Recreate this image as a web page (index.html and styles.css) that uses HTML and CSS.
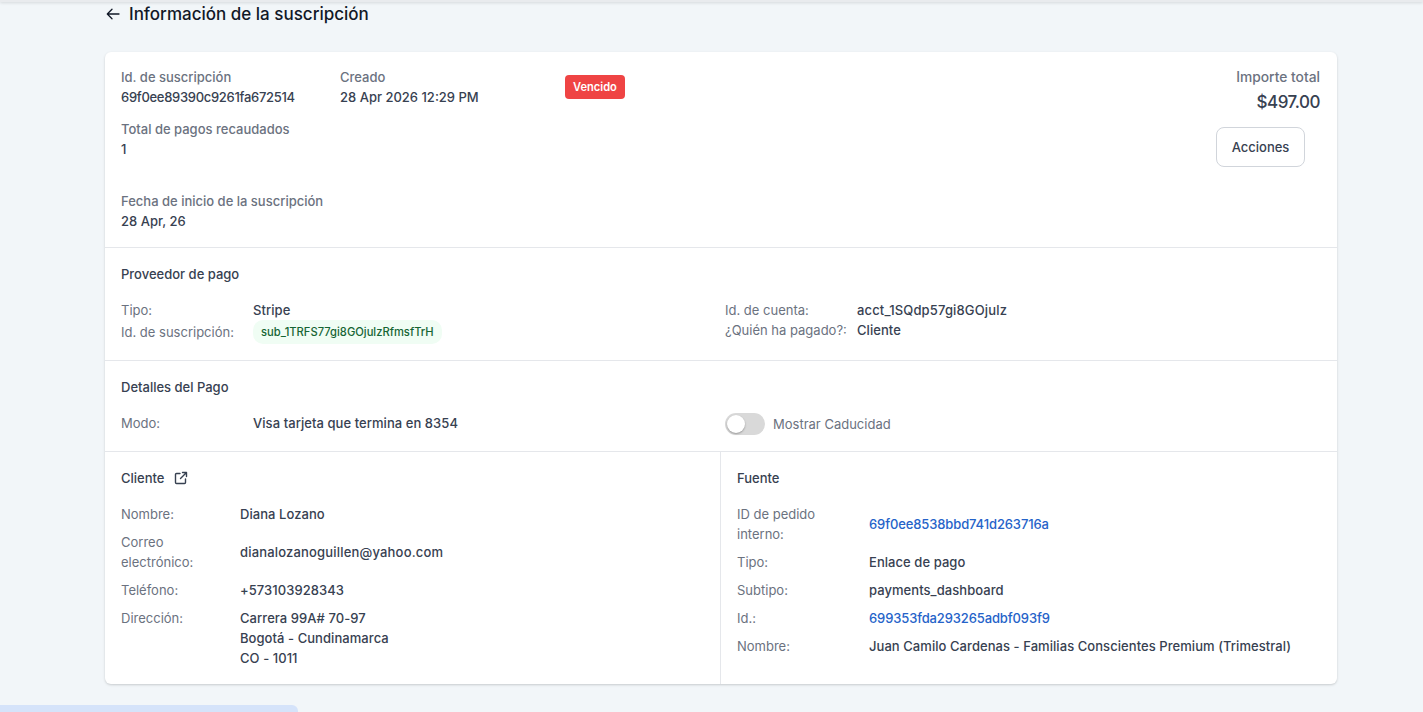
FILE: index.html
```html
<!DOCTYPE html>
<html lang="es">
<head>
    <meta charset="UTF-8">
    <meta name="viewport" content="width=device-width, initial-scale=1.0">
    <link rel="stylesheet" href="styles.css">
    <title>Información de la suscripción</title>
</head>
<body>
    <div class="topbar"></div>

    <div class="page">
        <div class="page-head">
            <svg class="back" width="16" height="16" viewBox="0 0 16 16" fill="none" stroke="#111827" stroke-width="1.3" stroke-linecap="round" stroke-linejoin="round">
                <path d="M14 8H2.5M7 3.2 2.3 8 7 12.8"/>
            </svg>
            <h1>Información de la suscripción</h1>
        </div>

        <div class="card">
            <div class="summary">
                <div class="summary-left">
                    <div class="summary-row">
                        <div class="field field-id">
                            <div class="label">Id. de suscripción</div>
                            <div class="value id-value">69f0ee89390c9261fa672514</div>
                        </div>
                        <div class="field field-date">
                            <div class="label">Creado</div>
                            <div class="value">28 Apr 2026 12:29 PM</div>
                        </div>
                        <span class="badge">Vencido</span>
                    </div>
                    <div class="field field-total">
                        <div class="label">Total de pagos recaudados</div>
                        <div class="value">1</div>
                    </div>
                    <div class="field">
                        <div class="label">Fecha de inicio de la suscripción</div>
                        <div class="value">28 Apr, 26</div>
                    </div>
                </div>
                <div class="summary-right">
                    <div class="label total-label">Importe total</div>
                    <div class="amount">$497.00</div>
                    <button class="btn">Acciones</button>
                </div>
            </div>

            <div class="section section-provider">
                <h2>Proveedor de pago</h2>
                <div class="two-cols">
                    <div class="info-grid">
                        <span class="key">Tipo:</span><span class="val">Stripe</span>
                        <span class="key">Id. de suscripción:</span><span class="val"><span class="chip">sub_1TRFS77gi8GOjulzRfmsfTrH</span></span>
                    </div>
                    <div class="info-grid">
                        <span class="key">Id. de cuenta:</span><span class="val acct">acct_1SQdp57gi8GOjulz</span>
                        <span class="key">¿Quién ha pagado?:</span><span class="val">Cliente</span>
                    </div>
                </div>
            </div>

            <div class="section section-payment">
                <h2>Detalles del Pago</h2>
                <div class="two-cols">
                    <div class="info-grid">
                        <span class="key">Modo:</span><span class="val">Visa tarjeta que termina en 8354</span>
                    </div>
                    <div class="toggle-row">
                        <span class="toggle"><span class="knob"></span></span>
                        <span class="key">Mostrar Caducidad</span>
                    </div>
                </div>
            </div>

            <div class="bottom">
                <div class="bottom-col col-client">
                    <h2>Cliente
                        <svg class="ext" width="14" height="14" viewBox="0 0 14 14" fill="none" stroke="#374151" stroke-width="1.4" stroke-linecap="round" stroke-linejoin="round">
                            <path d="M6 2.5H2.5a1 1 0 0 0-1 1v8a1 1 0 0 0 1 1h8a1 1 0 0 0 1-1V8M8.5 1.5h4v4M12.5 1.5 6.5 7.5"/>
                        </svg>
                    </h2>
                    <div class="rows rows-client">
                        <span class="key">Nombre:</span><span class="val">Diana Lozano</span>
                        <span class="key">Correo electrónico:</span><span class="val email">dianalozanoguillen@yahoo.com</span>
                        <span class="key">Teléfono:</span><span class="val">+573103928343</span>
                        <span class="key key-top">Dirección:</span><span class="val">Carrera 99A# 70-97<br>Bogotá - Cundinamarca<br>CO - 1011</span>
                    </div>
                </div>
                <div class="bottom-col col-source">
                    <h2>Fuente</h2>
                    <div class="rows rows-source">
                        <span class="key">ID de pedido interno:</span><span class="val link">69f0ee8538bbd741d263716a</span>
                        <span class="key">Tipo:</span><span class="val">Enlace de pago</span>
                        <span class="key">Subtipo:</span><span class="val">payments_dashboard</span>
                        <span class="key">Id.:</span><span class="val link">699353fda293265adbf093f9</span>
                        <span class="key">Nombre:</span><span class="val">Juan Camilo Cardenas - Familias Conscientes Premium (Trimestral)</span>
                    </div>
                </div>
            </div>
        </div>

        <div class="next-bar"></div>
    </div>
</body>
</html>
```

FILE: styles.css
```css
*{
    margin: 0;
    padding: 0;
    box-sizing: border-box;
}

html, body{
    height: 712px;
    overflow: hidden;
}

body{
    background: #f2f6f9;
    font-family: Inter, "Noto Sans", sans-serif;
    font-size: 13px;
    line-height: 20px;
    color: #374151;
}

.topbar{
    height: 2px;
    background: #e9ebee;
    box-shadow: 0 1px 3px rgba(0, 0, 0, 0.14);
}

.page{
    width: 1232px;
    margin-left: 105px;
}

.page-head{
    height: 50px;
    display: flex;
    align-items: flex-start;
    padding-top: 2px;
    gap: 8px;
}

.back{
    margin-top: 2px;
}

h1{
    font-size: 17px;
    line-height: 20px;
    font-weight: 500;
    color: #111827;
}

h2{
    font-size: 13px;
    line-height: 20px;
    font-weight: 500;
    color: #374151;
}

.card{
    height: 632px;
    background: #fff;
    border-radius: 6px;
    box-shadow: 0 1px 3px rgba(0, 0, 0, 0.12), 0 1px 2px rgba(0, 0, 0, 0.06);
    display: flex;
    flex-direction: column;
}

.summary{
    height: 196px;
    padding: 15px 17px 0 16px;
    border-bottom: 1px solid #e5e7eb;
    display: flex;
    justify-content: space-between;
}

.summary-row{
    display: flex;
}

.field-id{
    width: 219px;
}

.field-date{
    width: 225px;
}

.field-total{
    margin-top: 12px;
    margin-bottom: 32px;
}

.label{
    color: #6b7280;
    font-weight: 500;
}

.total-label{
    font-size: 13.8px;
}

.value{
    font-weight: 500;
    color: #374151;
}

.id-value{
    letter-spacing: -0.3px;
}

.badge{
    align-self: flex-start;
    margin-top: 8px;
    height: 24px;
    padding: 0 8px;
    background: #ef4444;
    color: #fff;
    border-radius: 4px;
    font-size: 11.1px;
    line-height: 24px;
    font-weight: 600;
}

.summary-right{
    display: flex;
    flex-direction: column;
    align-items: flex-end;
}

.amount{
    font-size: 17px;
    line-height: 28px;
    font-weight: 500;
    letter-spacing: -0.45px;
    color: #374151;
    margin-top: 1px;
}

.btn{
    margin-top: 11px;
    margin-right: 15px;
    width: 89px;
    height: 40px;
    background: #fff;
    border: 1px solid #d1d5db;
    border-radius: 8px;
    font-family: inherit;
    font-size: 13px;
    font-weight: 500;
    color: #374151;
}

.section{
    padding: 16px 16px 0;
    border-bottom: 1px solid #e5e7eb;
}

.section-provider{
    height: 113px;
}

.section-payment{
    height: 91px;
}

.two-cols{
    display: grid;
    grid-template-columns: 604px 1fr;
    margin-top: 16px;
}

.info-grid{
    display: grid;
    grid-template-columns: 132px 1fr;
    align-items: center;
    align-content: start;
}

.key{
    color: #6b7280;
    font-weight: 400;
}

.val{
    font-weight: 500;
    color: #374151;
    letter-spacing: 0.06px;
}

.acct{
    letter-spacing: 0.15px;
}

.chip{
    display: inline-block;
    height: 24px;
    padding: 0 8px;
    background: #f0fdf4;
    color: #166534;
    border-radius: 10px;
    font-size: 11.2px;
    line-height: 24px;
    letter-spacing: 0;
}

.toggle-row{
    display: flex;
    align-items: center;
    gap: 8px;
}

.toggle{
    width: 40px;
    height: 22px;
    border-radius: 11px;
    background: #d9d9d9;
    display: flex;
    align-items: center;
    padding-left: 2px;
}

.knob{
    width: 18px;
    height: 18px;
    border-radius: 50%;
    background: #fff;
    box-shadow: 0 1px 2px rgba(0, 0, 0, 0.3);
}

.bottom{
    flex: 1;
    display: grid;
    grid-template-columns: 615px 1fr;
}

.bottom-col{
    padding: 16px;
}

.col-source{
    border-left: 1px solid #e5e7eb;
}

.bottom h2{
    display: flex;
    align-items: center;
    gap: 10px;
}

.rows{
    display: grid;
    row-gap: 8px;
    margin-top: 16px;
    align-items: center;
}

.rows .key{
    padding-right: 12px;
}

.rows-client{
    grid-template-columns: 119px 1fr;
}

.rows-source{
    grid-template-columns: 132px 1fr;
}

.key-top{
    align-self: start;
}

.val.email{
    letter-spacing: 0.18px;
}

.val.link{
    color: #2563c9;
    letter-spacing: -0.12px;
}

.next-bar{
    margin-top: 21px;
    margin-left: -105px;
    width: 298px;
    height: 20px;
    background: #d5e3fa;
    border-radius: 0 6px 0 0;
}
```
